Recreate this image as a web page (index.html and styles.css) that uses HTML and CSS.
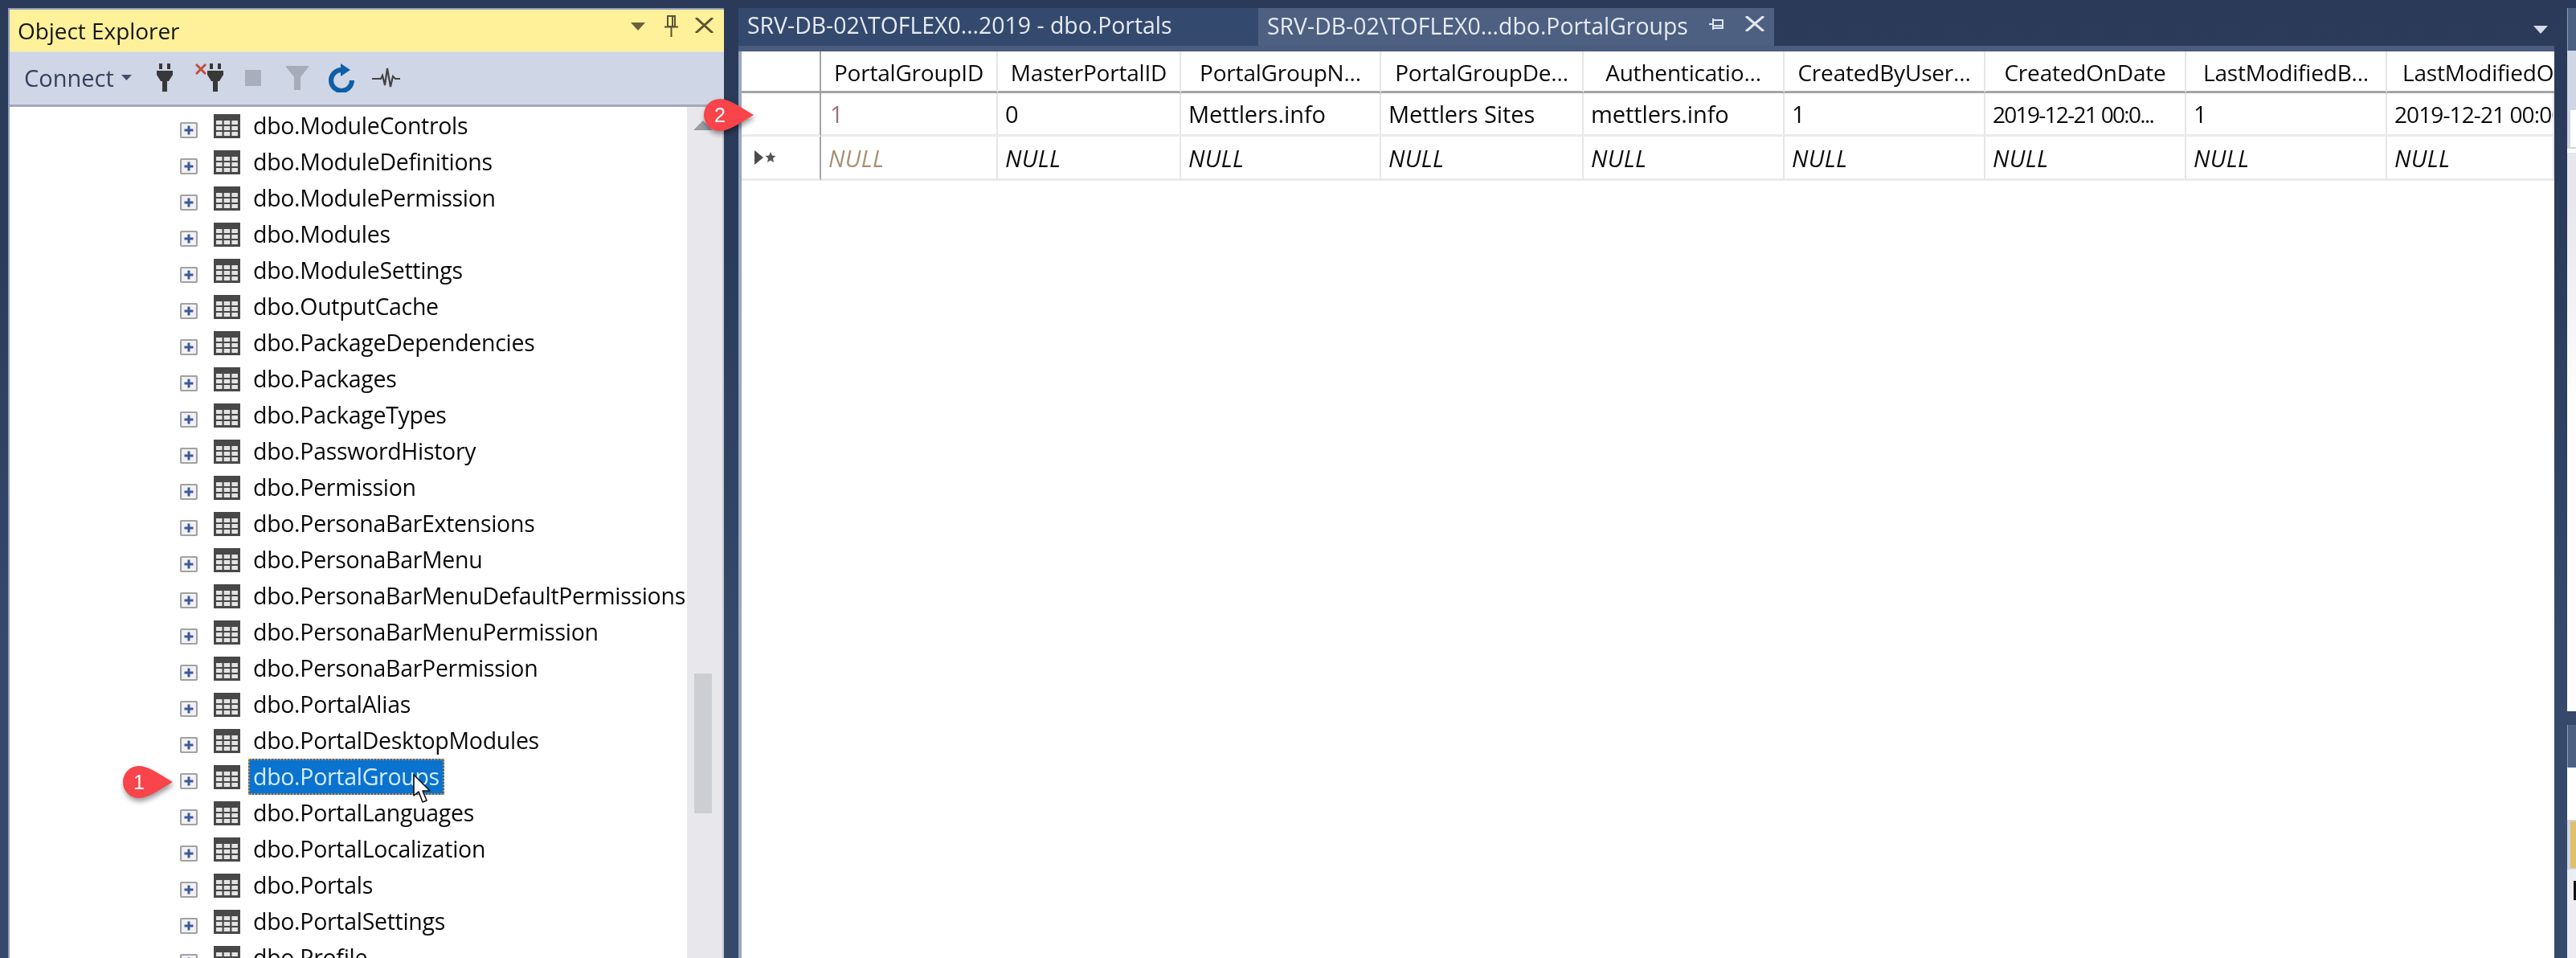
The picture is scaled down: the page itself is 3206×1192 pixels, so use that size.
FILE: index.html
```html
<!DOCTYPE html>
<html lang="en">
<head>
<meta charset="utf-8">
<title>Object Explorer</title>
<link rel="stylesheet" href="styles.css">
</head>
<body>
<svg class="defs" width="0" height="0" aria-hidden="true">
  <symbol id="tbl" viewBox="0 0 33 30">
    <rect width="33" height="30" fill="#484848"/>
    <g fill="#e4e4e4">
      <rect x="3" y="8" width="7.5" height="5"/><rect x="12.7" y="8" width="7.5" height="5"/><rect x="22.4" y="8" width="7.5" height="5"/>
      <rect x="3" y="15" width="7.5" height="5"/><rect x="12.7" y="15" width="7.5" height="5"/><rect x="22.4" y="15" width="7.5" height="5"/>
      <rect x="3" y="22" width="7.5" height="5"/><rect x="12.7" y="22" width="7.5" height="5"/><rect x="22.4" y="22" width="7.5" height="5"/>
    </g>
  </symbol>
  <symbol id="plus" viewBox="0 0 22 20">
    <rect x="1" y="1" width="20" height="18" rx="1.5" fill="#f2f2f4" stroke="#a2a2a2" stroke-width="2.2"/>
    <path d="M11 4.500v11M5.500 10h11" stroke="#3a5a9c" stroke-width="3" fill="none"/>
  </symbol>
  <symbol id="plug" viewBox="0 0 20 35">
    <path fill="#383838" d="M3 0h4v7H3zM13 0h4v7h-4zM0 9h20v5l-5 8h-2v13H7V22H5l-5-8z"/>
  </symbol>
  <symbol id="drop" viewBox="0 0 62 40">
    <path fill="#f8444a" d="M20 0C32 0 48 12 62 20C48 28 32 40 20 40A20 20 0 0 1 20 0Z"/>
  </symbol>
</svg>

<div class="app">
  <section class="explorer">
    <header class="oe-title">
      <span class="oe-title-text">Object Explorer</span>
      <div class="oe-title-icons">
        <svg class="ic-tri" viewBox="0 0 18 10"><path d="M0 0h18L9 10z" fill="#6b6238"/></svg>
        <svg class="ic-pin" viewBox="0 0 17 27"><path d="M4 1h9v13H4zM0 14.500h17M8.500 15v12M10 2v12" fill="none" stroke="#5a5436" stroke-width="2"/></svg>
        <svg class="ic-x" viewBox="0 0 23 19"><path d="M1 0l21 19M22 0L1 19" fill="none" stroke="#5c5635" stroke-width="3"/></svg>
      </div>
    </header>
    <div class="oe-tools">
      <span class="connect">Connect</span>
      <svg class="ic-caret" viewBox="0 0 13 7"><path d="M0 0h13L6.500 7z" fill="#44506a"/></svg>
      <svg class="ic-plug"><use href="#plug"/></svg>
      <div class="plug-x">
        <svg class="ic-redx" viewBox="0 0 14 14"><path d="M1 1l12 12M13 1L1 13" stroke="#c0503c" stroke-width="3" fill="none"/></svg>
        <svg class="ic-plug"><use href="#plug"/></svg>
      </div>
      <div class="ic-stop"></div>
      <svg class="ic-funnel" viewBox="0 0 30 30"><path d="M0 0h30L19 14v16h-8V14z" fill="#a7acb8"/></svg>
      <svg class="ic-refresh" viewBox="0 0 32 36"><path d="M16 8A13 13 0 1 0 29 21" fill="none" stroke="#0e5fa8" stroke-width="6"/><path d="M15 0l12 8-12 8z" fill="#0e5fa8"/></svg>
      <svg class="ic-activity" viewBox="0 0 35 25"><path d="M0 14H11L13 10L16 22L19 1L23 24L26 11L29 14H35" fill="none" stroke="#444" stroke-width="2.200"/></svg>
    </div>
    <div class="tree">
      <ul class="tree-list">
        <li class="node"><svg class="plus"><use href="#plus"/></svg><svg class="tbl"><use href="#tbl"/></svg><span class="label">dbo.ModuleControls</span></li>
        <li class="node"><svg class="plus"><use href="#plus"/></svg><svg class="tbl"><use href="#tbl"/></svg><span class="label">dbo.ModuleDefinitions</span></li>
        <li class="node"><svg class="plus"><use href="#plus"/></svg><svg class="tbl"><use href="#tbl"/></svg><span class="label">dbo.ModulePermission</span></li>
        <li class="node"><svg class="plus"><use href="#plus"/></svg><svg class="tbl"><use href="#tbl"/></svg><span class="label">dbo.Modules</span></li>
        <li class="node"><svg class="plus"><use href="#plus"/></svg><svg class="tbl"><use href="#tbl"/></svg><span class="label">dbo.ModuleSettings</span></li>
        <li class="node"><svg class="plus"><use href="#plus"/></svg><svg class="tbl"><use href="#tbl"/></svg><span class="label">dbo.OutputCache</span></li>
        <li class="node"><svg class="plus"><use href="#plus"/></svg><svg class="tbl"><use href="#tbl"/></svg><span class="label">dbo.PackageDependencies</span></li>
        <li class="node"><svg class="plus"><use href="#plus"/></svg><svg class="tbl"><use href="#tbl"/></svg><span class="label">dbo.Packages</span></li>
        <li class="node"><svg class="plus"><use href="#plus"/></svg><svg class="tbl"><use href="#tbl"/></svg><span class="label">dbo.PackageTypes</span></li>
        <li class="node"><svg class="plus"><use href="#plus"/></svg><svg class="tbl"><use href="#tbl"/></svg><span class="label">dbo.PasswordHistory</span></li>
        <li class="node"><svg class="plus"><use href="#plus"/></svg><svg class="tbl"><use href="#tbl"/></svg><span class="label">dbo.Permission</span></li>
        <li class="node"><svg class="plus"><use href="#plus"/></svg><svg class="tbl"><use href="#tbl"/></svg><span class="label">dbo.PersonaBarExtensions</span></li>
        <li class="node"><svg class="plus"><use href="#plus"/></svg><svg class="tbl"><use href="#tbl"/></svg><span class="label">dbo.PersonaBarMenu</span></li>
        <li class="node"><svg class="plus"><use href="#plus"/></svg><svg class="tbl"><use href="#tbl"/></svg><span class="label">dbo.PersonaBarMenuDefaultPermissions</span></li>
        <li class="node"><svg class="plus"><use href="#plus"/></svg><svg class="tbl"><use href="#tbl"/></svg><span class="label">dbo.PersonaBarMenuPermission</span></li>
        <li class="node"><svg class="plus"><use href="#plus"/></svg><svg class="tbl"><use href="#tbl"/></svg><span class="label">dbo.PersonaBarPermission</span></li>
        <li class="node"><svg class="plus"><use href="#plus"/></svg><svg class="tbl"><use href="#tbl"/></svg><span class="label">dbo.PortalAlias</span></li>
        <li class="node"><svg class="plus"><use href="#plus"/></svg><svg class="tbl"><use href="#tbl"/></svg><span class="label">dbo.PortalDesktopModules</span></li>
        <li class="node"><svg class="plus"><use href="#plus"/></svg><svg class="tbl"><use href="#tbl"/></svg><span class="label selected">dbo.PortalGroups</span></li>
        <li class="node"><svg class="plus"><use href="#plus"/></svg><svg class="tbl"><use href="#tbl"/></svg><span class="label">dbo.PortalLanguages</span></li>
        <li class="node"><svg class="plus"><use href="#plus"/></svg><svg class="tbl"><use href="#tbl"/></svg><span class="label">dbo.PortalLocalization</span></li>
        <li class="node"><svg class="plus"><use href="#plus"/></svg><svg class="tbl"><use href="#tbl"/></svg><span class="label">dbo.Portals</span></li>
        <li class="node"><svg class="plus"><use href="#plus"/></svg><svg class="tbl"><use href="#tbl"/></svg><span class="label">dbo.PortalSettings</span></li>
        <li class="node"><svg class="plus"><use href="#plus"/></svg><svg class="tbl"><use href="#tbl"/></svg><span class="label">dbo.Profile</span></li>
      </ul>
      <div class="scrollbar">
        <svg class="sb-arrow" viewBox="0 0 24 12"><path d="M0 12L12 0l12 12z" fill="#9a9ca6"/></svg>
        <div class="sb-thumb"></div>
      </div>
    </div>
  </section>

  <section class="editor">
    <div class="tabs">
      <div class="tab">SRV-DB-02\TOFLEX0...2019 - dbo.Portals</div>
      <div class="tab active">
        <span>SRV-DB-02\TOFLEX0...dbo.PortalGroups</span>
        <svg class="tab-pin" viewBox="0 0 20 16"><path d="M0 8h5M5 1v14M5 3h12v10H5M5 10h12" fill="none" stroke="#dfe4ef" stroke-width="2"/></svg>
        <svg class="tab-x" viewBox="0 0 24 19"><path d="M1 0l22 19M23 0L1 19" fill="none" stroke="#e4e8f1" stroke-width="3"/></svg>
      </div>
      <svg class="tabs-drop" viewBox="0 0 18 10"><path d="M0 0h18L9 10z" fill="#d5dbe8"/></svg>
    </div>
    <div class="tabs-line"></div>
    <div class="grid">
      <div class="th rowhead"></div>
      <div class="th">PortalGroupID</div>
      <div class="th">MasterPortalID</div>
      <div class="th">PortalGroupN...</div>
      <div class="th">PortalGroupDe...</div>
      <div class="th">Authenticatio...</div>
      <div class="th">CreatedByUser...</div>
      <div class="th">CreatedOnDate</div>
      <div class="th">LastModifiedB...</div>
      <div class="th th-clip">LastModifiedOnDate</div>

      <div class="td rowhead"></div>
      <div class="td key">1</div>
      <div class="td">0</div>
      <div class="td">Mettlers.info</div>
      <div class="td">Mettlers Sites</div>
      <div class="td">mettlers.info</div>
      <div class="td">1</div>
      <div class="td date">2019-12-21 00:0...</div>
      <div class="td">1</div>
      <div class="td date date-last">2019-12-21 00:00:00</div>

      <div class="td rowhead">
        <svg class="newrow" viewBox="0 0 28 18"><path d="M1 0l11 9-11 9z" fill="#4a4a4a"/><path d="M21 2l2 4.500 4.500.5-3.500 3 1 5-4-2.500-4 2.500 1-5-3.500-3 4.500-.5z" fill="#555"/></svg>
      </div>
      <div class="td null key-null">NULL</div>
      <div class="td null">NULL</div>
      <div class="td null">NULL</div>
      <div class="td null">NULL</div>
      <div class="td null">NULL</div>
      <div class="td null">NULL</div>
      <div class="td null">NULL</div>
      <div class="td null">NULL</div>
      <div class="td null">NULL</div>
    </div>
  </section>

  <aside class="side">
    <div class="side-top">
      <div class="side-head"></div>
      <div class="side-tools"><div class="side-box"></div></div>
      <div class="side-white"></div>
      <div class="side-tree"></div>
    </div>
    <div class="side-bottom">
      <div class="side-head"></div>
      <div class="side-blank"></div>
      <div class="side-warn"><div class="side-warn-fill"></div></div>
      <div class="side-rest"><div class="side-mark"></div></div>
    </div>
  </aside>
</div>

<div class="badge badge-one"><svg class="badge-shape"><use href="#drop"/></svg><span class="badge-num">1</span></div>
<div class="badge badge-two"><svg class="badge-shape"><use href="#drop"/></svg><span class="badge-num">2</span></div>
<svg class="cursor" viewBox="0 0 24 37"><path d="M1 1v26l6-5 5 13 5-2-5-12h9z" fill="#fff" stroke="#111" stroke-width="1.600" stroke-linejoin="round"/></svg>
</body>
</html>
```
FILE: styles.css
```css
* { box-sizing: border-box; }
html, body { margin: 0; padding: 0; }
body {
  width: 3206px;
  height: 1192px;
  overflow: hidden;
  position: relative;
  background: linear-gradient(#2a3a58 0, #2b3b5a 300px, #36496b 800px, #36496b 100%);
  font-family: "Open Sans", "Noto Sans", sans-serif;
  color: #0a0a0a;
}
.defs { position: absolute; }
svg { display: block; flex: none; }

.app {
  display: flex;
  height: 1192px;
  padding: 10px 0 0 10px;
  filter: blur(0.7px);
}

/* Object Explorer */
.explorer {
  width: 891px;
  display: flex;
  flex-direction: column;
  border-top: 2px solid #8f9dbd;
  border-left: 2px solid #8f9dbd;
  flex: none;
}
.oe-title {
  height: 52px;
  background: #fff09a;
  display: flex;
  align-items: center;
  justify-content: space-between;
  padding: 0 13px 0 10px;
  flex: none;
}
.oe-title-text { font-size: 28px; letter-spacing: -0.05px; color: #141414; }
.oe-title-icons { display: flex; align-items: flex-start; margin-top: -12px; }
.ic-tri { width: 18px; height: 10px; margin-top: 10px; }
.ic-pin { width: 17px; height: 27px; margin-left: 24px; margin-top: 1px; }
.ic-x { width: 23px; height: 19px; margin-left: 21px; margin-top: 4px; }

.oe-tools {
  height: 69px;
  background: #cfd6e6;
  border-top: 1px solid #dde2ee;
  border-bottom: 3px solid #a3a9b8;
  display: flex;
  align-items: center;
  padding: 0 0 2px 18px;
  flex: none;
}
.connect { font-size: 29px; color: #35405e; width: 112px; }
.ic-caret { width: 13px; height: 7px; margin-left: 9px; }
.ic-plug { width: 20px; height: 35px; }
.oe-tools > .ic-plug { margin-left: 31px; }
.plug-x { display: flex; margin-left: 28px; align-items: flex-start; }
.ic-redx { width: 14px; height: 14px; margin-right: 1px; }
.ic-stop { width: 20px; height: 20px; background: #a9aebc; margin-left: 27px; }
.ic-funnel { width: 30px; height: 30px; margin-left: 30px; }
.ic-refresh { width: 32px; height: 36px; margin-left: 24px; }
.ic-activity { width: 35px; height: 25px; margin-left: 22px; }

.tree {
  flex: 1;
  min-height: 0;
  display: flex;
  background: #fff;
  overflow: hidden;
}
.tree-list {
  list-style: none;
  margin: 0;
  padding: 1px 0 0 212px;
  flex: 1;
  min-width: 0;
}
.node {
  height: 45px;
  display: flex;
  align-items: center;
}
.plus { width: 22px; height: 20px; margin-top: 10px; }
.tbl { width: 33px; height: 30px; margin-left: 20px; }
.label {
  height: 45px;
  line-height: 43px;
  margin-left: 10px;
  padding: 0 5px;
  font-size: 28.5px;
  letter-spacing: -0.3px;
  white-space: nowrap;
  border: 1px solid transparent;
}
.selected {
  background: #0a72cf;
  color: #d4ecff;
  border: 2px dotted #d98a2c;
  line-height: 41px;
  padding: 0 4px;
}
.scrollbar {
  width: 46px;
  flex: none;
  background: #e8e8ec;
  display: flex;
  flex-direction: column;
  align-items: flex-start;
  padding: 17px 0 0 8px;
  border-right: 2px solid #c5cbd9;
}
.sb-arrow { width: 24px; height: 12px; }
.sb-thumb { width: 22px; height: 174px; background: #cdced3; margin-top: 676px; margin-left: 1px; }

/* Editor */
.editor {
  width: 2260px;
  margin-left: 18px;
  flex: none;
  display: flex;
  flex-direction: column;
  min-width: 0;
}
.tabs {
  height: 47px;
  display: flex;
  align-items: stretch;
  flex: none;
  position: relative;
  font-size: 28.4px;
  color: #e6eaf2;
}
.tab {
  width: 647px;
  background: #34496e;
  padding: 0 0 0 11px;
  line-height: 43px;
  white-space: nowrap;
  flex: none;
}
.tab.active {
  width: 642px;
  background: #4d6082;
  display: flex;
  align-items: center;
}
.tab.active span { line-height: 43px; margin-top: -3px; }
.tab-pin { width: 20px; height: 16px; margin-left: 26px; margin-top: -8px; }
.tab-x { width: 24px; height: 19px; margin-left: 25px; margin-top: -8px; }
.tabs-drop { width: 18px; height: 10px; margin: 22px 8px 0 auto; }
.tabs-line { height: 7px; background: #4a5d80; flex: none; }
.grid {
  flex: 1;
  min-height: 0;
  background: #fff;
  border-left: 4px solid #9aa7c2;
  overflow: hidden;
  display: grid;
  grid-template-columns: 99px 220px 228px 249px 252px 250px 250px 250px 250px 208px;
  grid-template-rows: 52px 54px 55px;
  align-content: start;
  font-size: 29px;
  letter-spacing: -0.1px;
}
.th, .td {
  white-space: nowrap;
  overflow: hidden;
  display: flex;
  align-items: center;
  border-right: 2px solid #e6e6e6;
}
.th {
  justify-content: center;
  border-bottom: 3px solid #a4a4a4;
  padding-top: 2px;
  font-size: 28px;
  letter-spacing: -0.2px;
}
.th-clip { justify-content: flex-start; padding-left: 19px; border-right: 0; }
.td {
  padding-left: 9px;
  border-bottom: 3px solid #ebebeb;
}
.date { font-size: 28px; letter-spacing: -1.7px; }
.date-last { letter-spacing: -0.9px; }
.rowhead { border-right: 2px solid #a4a4a4; padding-left: 15px; }
.key { color: #9a7078; padding-left: 11px; }
.null { font-style: italic; letter-spacing: 0.3px; }
.key-null { color: #a8906f; }
.newrow { width: 28px; height: 18px; }

/* Right-hand docked panel */
.side {
  width: 11px;
  margin-left: 16px;
  flex: none;
  display: flex;
  flex-direction: column;
  overflow: hidden;
}
.side-top { height: 875px; display: flex; flex-direction: column; background: #fff; flex: none; }
.side-head { height: 53px; background: #4d6082; border-left: 1px solid #8f9dbd; flex: none; }
.side-tools { height: 122px; background: #cfd6e6; padding: 74px 0 0 4px; flex: none; }
.side-box { height: 46px; background: #fff; }
.side-white { height: 5px; background: #fff; flex: none; }
.side-tree { flex: 1; background: linear-gradient(#e6e7ec 0, #e6e7ec 60px, #fdfdfd 300px); }
.side-bottom { margin-top: 17px; flex: 1; display: flex; flex-direction: column; background: #fff; }
.side-blank { height: 65px; flex: none; }
.side-warn { height: 62px; background: #cfd6e6; padding: 2px 0 2px 4px; flex: none; }
.side-warn-fill { height: 100%; background: #e0c068; }
.side-rest { flex: 1; background: #ecedf2; padding: 14px 0 0 8px; }
.side-mark { width: 3px; height: 24px; background: #111; }

/* Callouts and pointer */
.badge {
  position: absolute;
  width: 62px;
  height: 40px;
  color: #fff;
  font-family: "Liberation Sans", Arial, sans-serif;
  font-size: 25px;
  filter: blur(0.3px) drop-shadow(1px 4px 3px rgba(0, 0, 0, 0.4));
}
.badge-shape { width: 62px; height: 40px; }
.badge-num {
  position: absolute;
  left: 0;
  top: 0;
  width: 40px;
  line-height: 40px;
  text-align: center;
}
.badge-one { left: 153px; top: 953px; }
.badge-two { left: 876px; top: 123px; }
.cursor { position: absolute; left: 514px; top: 963px; width: 24px; height: 37px; }
```
